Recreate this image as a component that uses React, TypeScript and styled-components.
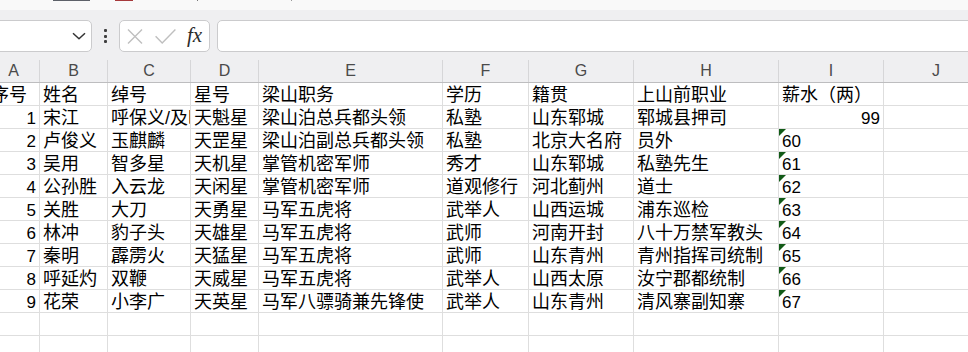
import React from "react";
import styled, { createGlobalStyle } from "styled-components";

const GlobalStyle = createGlobalStyle`
  html, body {
    margin: 0;
    padding: 0;
    background: #ffffff;
  }
  body {
    font-family: "Liberation Sans", "Noto Sans CJK SC", sans-serif;
    color: #000;
  }
  * { box-sizing: border-box; }
`;

const COLUMN_WIDTHS = [52, 68, 83, 68, 184, 86, 105, 145, 105, 105];
const COLUMN_LETTERS = ["A", "B", "C", "D", "E", "F", "G", "H", "I", "J"];
const GRID_TEMPLATE = COLUMN_WIDTHS.map((w) => `${w}px`).join(" ");

type Salary = { value: string; asText: boolean };
type Hero = {
  no: string;
  name: string;
  nickname: string;
  star: string;
  post: string;
  education: string;
  origin: string;
  formerJob: string;
  salary: Salary;
};

const heroes: Hero[] = [
  { no: "1", name: "宋江", nickname: "呼保义/及时雨", star: "天魁星", post: "梁山泊总兵都头领", education: "私塾", origin: "山东郓城", formerJob: "郓城县押司", salary: { value: "99", asText: false } },
  { no: "2", name: "卢俊义", nickname: "玉麒麟", star: "天罡星", post: "梁山泊副总兵都头领", education: "私塾", origin: "北京大名府", formerJob: "员外", salary: { value: "60", asText: true } },
  { no: "3", name: "吴用", nickname: "智多星", star: "天机星", post: "掌管机密军师", education: "秀才", origin: "山东郓城", formerJob: "私塾先生", salary: { value: "61", asText: true } },
  { no: "4", name: "公孙胜", nickname: "入云龙", star: "天闲星", post: "掌管机密军师", education: "道观修行", origin: "河北蓟州", formerJob: "道士", salary: { value: "62", asText: true } },
  { no: "5", name: "关胜", nickname: "大刀", star: "天勇星", post: "马军五虎将", education: "武举人", origin: "山西运城", formerJob: "浦东巡检", salary: { value: "63", asText: true } },
  { no: "6", name: "林冲", nickname: "豹子头", star: "天雄星", post: "马军五虎将", education: "武师", origin: "河南开封", formerJob: "八十万禁军教头", salary: { value: "64", asText: true } },
  { no: "7", name: "秦明", nickname: "霹雳火", star: "天猛星", post: "马军五虎将", education: "武师", origin: "山东青州", formerJob: "青州指挥司统制", salary: { value: "65", asText: true } },
  { no: "8", name: "呼延灼", nickname: "双鞭", star: "天威星", post: "马军五虎将", education: "武举人", origin: "山西太原", formerJob: "汝宁郡都统制", salary: { value: "66", asText: true } },
  { no: "9", name: "花荣", nickname: "小李广", star: "天英星", post: "马军八骠骑兼先锋使", education: "武举人", origin: "山东青州", formerJob: "清风寨副知寨", salary: { value: "67", asText: true } },
];

const titles = ["序号", "姓名", "绰号", "星号", "梁山职务", "学历", "籍贯", "上山前职业", "薪水（两）", ""];

/* ---------- window chrome ---------- */

const Viewport = styled.div`
  width: 968px;
  height: 352px;
  overflow: hidden;
  display: flex;
  flex-direction: column;
`;

const RibbonEdge = styled.div`
  height: 10px;
  flex: none;
  background: #f9f9f9;
  display: flex;
  align-items: flex-start;
`;

const TabEdge = styled.span<{ $left: number; $width: number; $color: string }>`
  display: block;
  margin-left: ${(p) => p.$left}px;
  width: ${(p) => p.$width}px;
  height: 1px;
  background: ${(p) => p.$color};
`;

const FormulaBar = styled.div`
  flex: none;
  height: 50px;
  background: #efeff1;
  padding-top: 10px;
  display: flex;
  align-items: flex-start;
`;

const FieldBox = styled.div`
  height: 32px;
  background: #ffffff;
  border: 1px solid #cbcbcd;
  border-radius: 5px;
  display: flex;
  align-items: center;
`;

const NameBox = styled(FieldBox)`
  margin-left: -12px;
  width: 104px;
  justify-content: flex-end;
  padding-right: 5px;
`;

const Grip = styled.div`
  width: 27px;
  height: 32px;
  display: flex;
  flex-direction: column;
  align-items: center;
  justify-content: center;
  gap: 2.5px;
`;

const GripDot = styled.span`
  width: 3px;
  height: 3px;
  border-radius: 1px;
  background: #3f3f3f;
`;

const ActionBox = styled(FieldBox)`
  width: 91px;
  padding: 0 5px 0 7px;
  gap: 12px;
`;

const FxLabel = styled.span`
  font-family: "Liberation Serif", "DejaVu Serif", serif;
  font-style: italic;
  font-size: 21px;
  line-height: 1;
  color: #2b2b2b;
  margin-left: -1px;
  margin-top: -2px;
`;

const FormulaInput = styled(FieldBox)`
  margin-left: 7px;
  flex: 1;
  margin-right: -12px;
`;

/* ---------- sheet grid ---------- */

const Sheet = styled.div`
  margin-left: -12px;
  display: flex;
  flex-direction: column;
`;

const HeaderRow = styled.div`
  display: grid;
  grid-template-columns: ${GRID_TEMPLATE};
  height: 23px;
  background: #efeff1;
  border-bottom: 1px solid #bdbdbf;
`;

const ColumnLetter = styled.div`
  border-right: 1px solid #d6d6d8;
  text-align: center;
  font-family: "Liberation Sans", sans-serif;
  font-size: 16px;
  line-height: 22px;
  color: #4a4a4a;
`;

const Row = styled.div`
  display: grid;
  grid-template-columns: ${GRID_TEMPLATE};
  height: 23px;
  flex: none;
`;

const Cell = styled.div<{ $align?: "left" | "right"; $textNumber?: boolean }>`
  position: relative;
  border-right: 1px solid #dedede;
  border-bottom: 1px solid #dedede;
  padding: 3px 3px 0 3px;
  font-size: 18px;
  line-height: 19px;
  white-space: nowrap;
  overflow: hidden;
  text-align: ${(p) => p.$align ?? "left"};

  ${(p) =>
    p.$textNumber &&
    `
    &::before {
      content: "";
      position: absolute;
      left: 0;
      top: 0;
      width: 0;
      height: 0;
      border-top: 7px solid #125a17;
      border-right: 7px solid transparent;
    }
  `}
`;

const Digits = styled.span`
  font-family: "Liberation Sans", sans-serif;
  font-size: 17px;
`;

const ChevronIcon = () => (
  <svg width="14" height="8" viewBox="0 0 14 8" fill="none">
    <path d="M1 1.2 L7 6.8 L13 1.2" stroke="#333" strokeWidth="1.5" strokeLinejoin="round" />
  </svg>
);

const CancelIcon = () => (
  <svg width="16" height="15" viewBox="0 0 16 15" fill="none">
    <path d="M1 0.5 L15 14.5 M15 0.5 L1 14.5" stroke="#bfbfbf" strokeWidth="1.4" />
  </svg>
);

const ConfirmIcon = () => (
  <svg width="21" height="15" viewBox="0 0 21 15" fill="none">
    <path d="M0.6 7.2 L7.2 14 L20.4 0.6" stroke="#bfbfbf" strokeWidth="1.4" />
  </svg>
);

export default function App() {
  return (
    <>
      <GlobalStyle />
      <Viewport>
        <RibbonEdge>
          <TabEdge $left={53} $width={37} $color="#5d6169" />
          <TabEdge $left={25} $width={18} $color="#a6393b" />
          <TabEdge $left={64} $width={1} $color="#7a7a7a" />
          <TabEdge $left={93} $width={1} $color="#9a9a9a" />
        </RibbonEdge>

        <FormulaBar>
          <NameBox>
            <ChevronIcon />
          </NameBox>
          <Grip>
            <GripDot />
            <GripDot />
            <GripDot />
          </Grip>
          <ActionBox>
            <CancelIcon />
            <ConfirmIcon />
            <FxLabel>fx</FxLabel>
          </ActionBox>
          <FormulaInput />
        </FormulaBar>

        <Sheet>
          <HeaderRow>
            {COLUMN_LETTERS.map((l) => (
              <ColumnLetter key={l}>{l}</ColumnLetter>
            ))}
          </HeaderRow>

          <Row>
            {titles.map((t, i) => (
              <Cell key={i}>{t}</Cell>
            ))}
          </Row>

          {heroes.map((h) => (
            <Row key={h.no}>
              <Cell $align="right">
                <Digits>{h.no}</Digits>
              </Cell>
              <Cell>{h.name}</Cell>
              <Cell>{h.nickname}</Cell>
              <Cell>{h.star}</Cell>
              <Cell>{h.post}</Cell>
              <Cell>{h.education}</Cell>
              <Cell>{h.origin}</Cell>
              <Cell>{h.formerJob}</Cell>
              <Cell $align={h.salary.asText ? "left" : "right"} $textNumber={h.salary.asText}>
                <Digits>{h.salary.value}</Digits>
              </Cell>
              <Cell />
            </Row>
          ))}

          {[0, 1, 2].map((r) => (
            <Row key={`blank-${r}`}>
              {COLUMN_WIDTHS.map((_, i) => (
                <Cell key={i} />
              ))}
            </Row>
          ))}
        </Sheet>
      </Viewport>
    </>
  );
}
